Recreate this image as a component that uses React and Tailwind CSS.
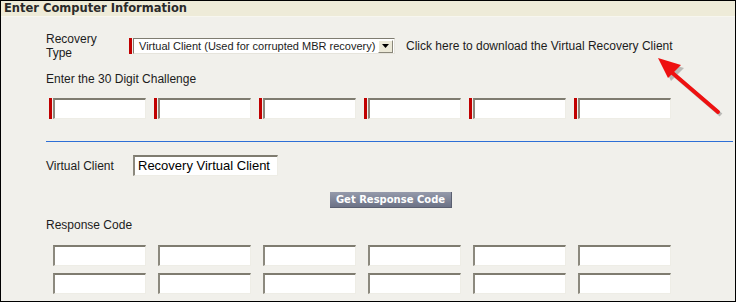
const arial = { fontFamily: '"Liberation Sans", Arial, sans-serif' }
const verdana = { fontFamily: '"DejaVu Sans", Verdana, sans-serif' }

function Field({ marked }) {
  return (
    <div className="flex items-stretch gap-[1px]">
      <div className={`w-[3px] ${marked ? 'bg-[#c00000]' : 'bg-transparent'}`} />
      <div className="w-[93px] h-[21px] bg-white border-t-2 border-l-2 border-t-[#7f7c70] border-l-[#8c897e] border-b border-r border-b-[#eeede6] border-r-[#eeede6]" />
    </div>
  )
}

function FieldRow({ marked }) {
  return (
    <div className="flex gap-[8px] pl-[3px]">
      {[0, 1, 2, 3, 4, 5].map(i => <Field key={i} marked={marked} />)}
    </div>
  )
}

export default function App() {
  return (
    <div className="relative w-[736px] h-[302px] overflow-hidden border border-black bg-[#f1f0eb] text-[#1c1c1c] leading-[18px]" style={arial}>
      {/* header */}
      <div className="h-[16px] bg-[#eeebd8] border-b border-[#f7f6ef] flex items-center pl-[3px]">
        <span className="text-[11.5px] font-bold text-[#2a2a2a] leading-none" style={verdana}>Enter Computer Information</span>
      </div>

      <div className="pl-[45px]">
        {/* recovery type */}
        <div className="flex items-center h-[28px] mt-[15px]">
          <div className="w-[83px] text-[12px] leading-[14px]">Recovery<br />Type</div>
          <div className="flex items-stretch gap-[1px]">
            <div className="w-[3px] bg-[#c00000]" />
            <div className="w-[262px] h-[16px] bg-white border-t border-l border-[#7f7c70] border-b border-r border-b-[#e6e4dc] border-r-[#e6e4dc] flex items-center justify-between pl-[5px] pr-[1px]">
              <span className="text-[11px] leading-none">Virtual Client (Used for corrupted MBR recovery)</span>
              <div className="w-[15px] h-[13px] bg-[#ece9d8] border border-t-white border-l-white border-b-[#8a877a] border-r-[#8a877a] flex items-center justify-center">
                <svg width="7" height="4" viewBox="0 0 7 4"><path d="M0 0h7L3.5 4z" fill="#000" /></svg>
              </div>
            </div>
          </div>
          <span className="ml-[11px] text-[12px]">Click here to download the Virtual Recovery Client</span>
        </div>

        <div className="mt-[12px] h-[14px] text-[12px] leading-[14px]">Enter the 30 Digit Challenge</div>

        <div className="mt-[12px]">
          <FieldRow marked />
        </div>

        <div className="mt-[22px] h-px bg-[#2d6fd6] mr-[2px]" />

        {/* virtual client */}
        <div className="flex items-center h-[21px] mt-[13px]">
          <div className="w-[87px] text-[12px]">Virtual Client</div>
          <div className="w-[145px] h-[21px] bg-white border-t-2 border-l-2 border-t-[#7f7c70] border-l-[#8c897e] border-b border-r border-b-[#eeede6] border-r-[#eeede6] flex items-center pl-[3px] text-[13px] text-black whitespace-nowrap overflow-hidden">
            Recovery Virtual Client
          </div>
        </div>

        <div className="flex mt-[16px] pl-[284px]">
          <div className="w-[122px] h-[16px] bg-gradient-to-b from-[#959aab] to-[#6c7286] border-b border-r border-[#5a5f70] flex items-center justify-center text-white text-[10px] font-bold leading-none" style={verdana}>
            Get Response Code
          </div>
        </div>

        <div className="mt-[10px] h-[14px] text-[12px] leading-[14px]">Response Code</div>

        <div className="mt-[13px] flex flex-col gap-[7px]">
          <FieldRow />
          <FieldRow />
        </div>
      </div>

      {/* arrow */}
      <svg className="absolute left-[640px] top-[45px]" width="90" height="80" viewBox="0 0 90 80">
        <g transform="translate(3,3)" opacity="0.35">
          <path d="M77 66 L28 24" stroke="#555" strokeWidth="4" />
          <path d="M17 12 L40 19 L27 32 Z" fill="#555" />
        </g>
        <path d="M77 66 L28 24" stroke="#ee1111" strokeWidth="4" strokeLinecap="round" />
        <path d="M17 12 L40 19 L27 32 Z" fill="#ee1111" />
      </svg>
    </div>
  )
}
